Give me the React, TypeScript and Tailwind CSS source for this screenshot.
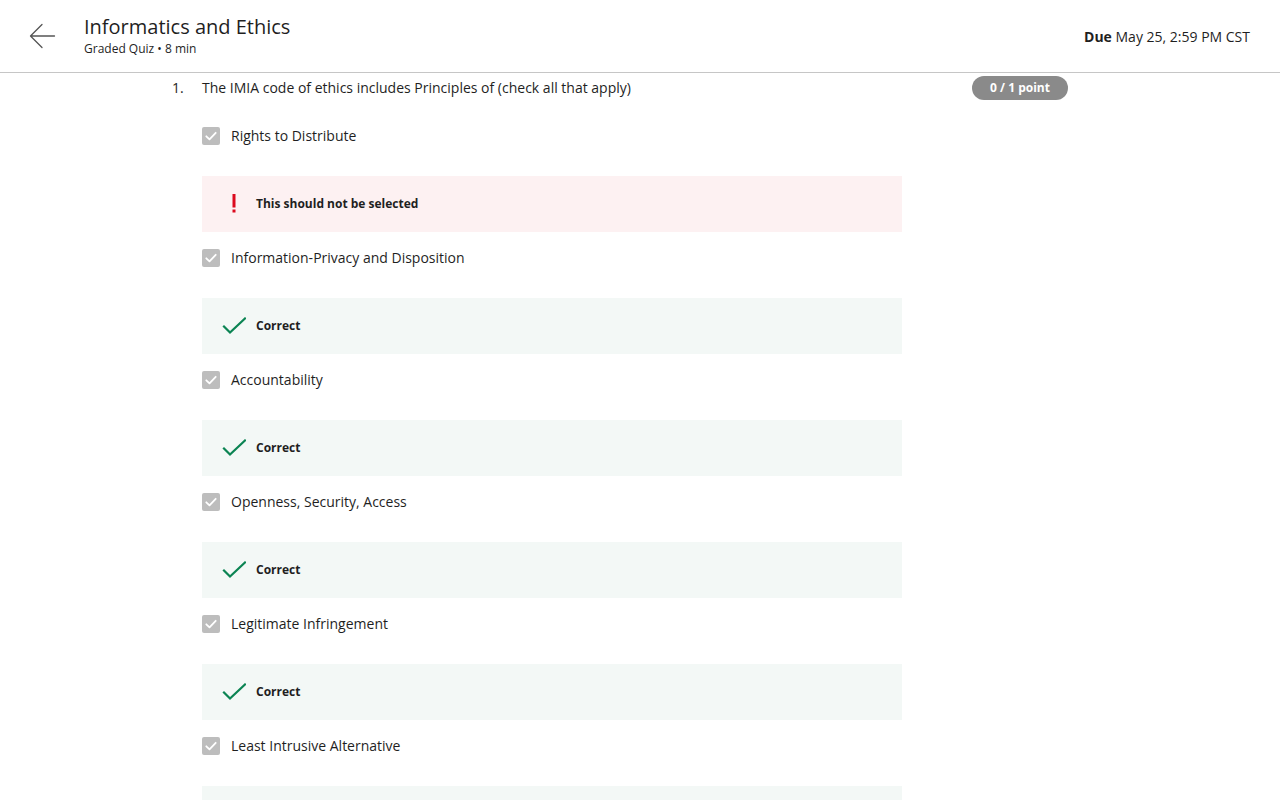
import React from "react";

type Opt = { label: string; kind: "wrong" | "correct" };

const options: Opt[] = [
  { label: "Rights to Distribute", kind: "wrong" },
  { label: "Information-Privacy and Disposition", kind: "correct" },
  { label: "Accountability", kind: "correct" },
  { label: "Openness, Security, Access", kind: "correct" },
  { label: "Legitimate Infringement", kind: "correct" },
  { label: "Least Intrusive Alternative", kind: "correct" },
];

function CheckBox() {
  return (
    <div className="w-[18px] h-[18px] rounded-[2px] bg-[#bdbdbd] flex items-center justify-center shrink-0">
      <svg width="14" height="14" viewBox="0 0 14 14" fill="none">
        <path d="M2.3 7.3 L5.5 10.4 L11.7 3.8" stroke="#fff" strokeWidth="1.8" strokeLinecap="round" strokeLinejoin="round" />
      </svg>
    </div>
  );
}

function Feedback({ kind }: { kind: "wrong" | "correct" }) {
  if (kind === "wrong") {
    return (
      <div className="h-14 w-[700px] bg-[#fdf1f2] flex items-center">
        <div className="w-[54px] pl-5 flex items-center">
          <svg width="24" height="22" viewBox="0 0 24 22" fill="none">
            <rect x="10.5" y="1" width="3" height="13.5" fill="#dc0a1e" />
            <rect x="10.5" y="16.5" width="3" height="3" fill="#dc0a1e" />
          </svg>
        </div>
        <span className="text-[12px] font-bold text-[#1f1f1f]">This should not be selected</span>
      </div>
    );
  }
  return (
    <div className="h-14 w-[700px] bg-[#f3f8f6] flex items-center">
      <div className="w-[54px] pl-5 flex items-center">
        <svg width="24" height="18" viewBox="0 0 24 18" fill="none">
          <path d="M2 9.5 L8 15.5 L23 1.5" stroke="#0b8453" strokeWidth="2.2" strokeLinecap="square" strokeLinejoin="miter" />
        </svg>
      </div>
      <span className="text-[12px] font-bold text-[#1f1f1f]">Correct</span>
    </div>
  );
}

export default function App() {
  return (
    <div className="w-[1280px] h-[800px] overflow-hidden bg-white text-[#1f1f1f]" style={{ fontFamily: "'Open Sans', 'Liberation Sans', sans-serif" }}>
      <header className="h-[73px] border-b border-[#c6c6c6] flex items-center">
        <div className="w-[84px] pl-[29px] flex items-center">
          <svg width="27" height="26" viewBox="0 0 27 26" fill="none">
            <path d="M25.5 13 H2 M13 1.5 L1.5 13 L13 24.5" stroke="#555" strokeWidth="1.3" strokeLinecap="round" strokeLinejoin="round" />
          </svg>
        </div>
        <div className="flex flex-col -mt-px">
          <h1 className="text-[20px] leading-[26px] text-[#1f1f1f]">Informatics and Ethics</h1>
          <p className="text-[12px] leading-[18px] text-[#1f1f1f]">Graded Quiz • 8 min</p>
        </div>
        <div className="ml-auto mr-[30px] text-[14px] text-[#1f1f1f]">
          <span className="font-bold">Due</span> May 25, 2:59 PM CST
        </div>
      </header>
      <main className="ml-[172px] w-[896px] pt-[3px]">
        <div className="h-6 flex items-center">
          <span className="w-[30px] text-[14px] pb-[2px]">1.</span>
          <span className="text-[14px] pb-[2px]">The IMIA code of ethics includes Principles of (check all that apply)</span>
          <span className="ml-auto h-6 w-[96px] rounded-full bg-[#8a8a8a] text-white text-[12px] font-bold flex items-center justify-center">0 / 1 point</span>
        </div>
        <div className="pl-[30px] pt-6 flex flex-col">
          {options.map((o, i) => (
            <div key={i} className="flex flex-col">
              <div className="h-6 flex items-center gap-[11px]">
                <CheckBox />
                <span className="text-[14px] pb-[2px]">{o.label}</span>
              </div>
              <div className="mt-7 mb-[14px]">
                <Feedback kind={o.kind} />
              </div>
            </div>
          ))}
        </div>
      </main>
    </div>
  );
}
